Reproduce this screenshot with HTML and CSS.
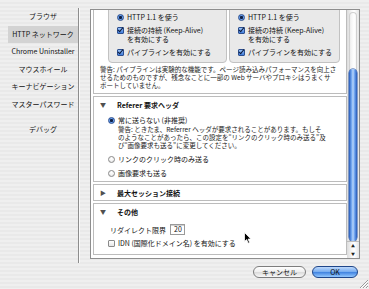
FILE: index.html
```html
<!DOCTYPE html>
<html lang="ja">

<head>
    <meta charset="UTF-8">
    <title>HTTP ネットワーク</title>
    <link rel="stylesheet" href="styles.css">
</head>

<body>

    <div class="prefs">
        <ul class="sidebar">
            <li>ブラウザ</li>
            <li class="selected">HTTP ネットワーク</li>
            <li>Chrome Uninstaller</li>
            <li>マウスホイール</li>
            <li>キーナビゲーション</li>
            <li>マスターパスワード</li>
            <li class="spaced">デバッグ</li>
        </ul>

        <div class="pane">
            <div class="scroll-frame">
                <div class="scroll-content">
                    <div class="sections">

                        <div class="section first">
                            <div class="groups">
                                <div class="group left">
                                    <div class="opt"><span class="radio on"></span><span>HTTP 1.1 を使う</span></div>
                                    <div class="opt"><span class="check on"></span><span>接続の持続 (Keep-Alive)<br>を有効にする</span></div>
                                    <div class="opt"><span class="check on"></span><span>パイプラインを有効にする</span></div>
                                </div>
                                <div class="group right">
                                    <div class="opt"><span class="radio on"></span><span>HTTP 1.1 を使う</span></div>
                                    <div class="opt"><span class="check on"></span><span>接続の持続 (Keep-Alive)<br>を有効にする</span></div>
                                    <div class="opt"><span class="check on"></span><span>パイプラインを有効にする</span></div>
                                </div>
                            </div>
                            <p class="note">警告: パイプラインは実験的な機能です。ページ読み込みパフォーマンスを向上さ<br>せるためのものですが、残念なことに一部の Web サーバやプロキシはうまくサ<br>ポートしていません。</p>
                        </div>

                        <div class="section">
                            <div class="section-head"><span class="twisty">▼</span>Referer 要求ヘッダ</div>
                            <div class="sec-body referer">
                                <div class="opt"><span class="radio on"></span><span>常に送らない (非推奨)</span></div>
                                <p class="note sub">警告: ときたま、Referrer ヘッダが要求されることがあります。もしそ<br>のようなことがあったら、この設定を“リンクのクリック時のみ送る”及<br>び“画像要求も送る”に変更してください。</p>
                                <div class="opt gap-l"><span class="radio"></span><span>リンクのクリック時のみ送る</span></div>
                                <div class="opt gap-s"><span class="radio"></span><span>画像要求も送る</span></div>
                            </div>
                        </div>

                        <div class="section closed">
                            <div class="section-head"><span class="twisty">▶</span>最大セッション接続</div>
                        </div>

                        <div class="section">
                            <div class="section-head"><span class="twisty">▼</span>その他</div>
                            <div class="sec-body misc">
                                <div class="field"><span>リダイレクト限界</span><span class="textbox">20</span></div>
                                <div class="opt"><span class="check"></span><span>IDN (国際化ドメイン名) を有効にする</span></div>
                            </div>
                        </div>

                    </div>
                </div>

                <div class="scrollbar">
                    <div class="track">
                        <div class="thumb"></div>
                    </div>
                    <div class="arrows">
                        <span class="arrow">▲</span>
                        <span class="arrow">▼</span>
                    </div>
                </div>
            </div>
        </div>
    </div>

    <div class="buttons">
        <span class="btn cancel">キャンセル</span>
        <span class="btn ok">OK</span>
    </div>

    <svg class="cursor" width="8" height="12" viewBox="0 0 8 12">
        <path d="M0.5 0.5 L0.5 9.5 L2.6 7.6 L4.2 11.2 L5.6 10.6 L4.1 7.1 L7 7.1 Z" fill="#000" stroke="#fff" stroke-width="0.8"/>
    </svg>

    <svg class="grip" width="10" height="10" viewBox="0 0 10 10">
        <path d="M2 10 L10 2 M5 10 L10 5 M8 10 L10 8" stroke="#9a9a9a" stroke-width="1"/>
        <path d="M3 10 L10 3 M6 10 L10 6 M9 10 L10 9" stroke="#fff" stroke-width="1"/>
    </svg>

</body>

</html>
```

FILE: styles.css
```css
body {
    margin: 0;
    width: 369px;
    height: 289px;
    overflow: hidden;
    position: relative;
    font-family: "Noto Sans CJK JP", "DejaVu Sans", sans-serif;
    font-size: 7px;
    color: #111;
    background: repeating-linear-gradient(to bottom, #efefef 0, #efefef 2px, #e9e9e9 2px, #e9e9e9 4px);
}

.prefs {
    display: flex;
    height: 263px;
    padding-top: 8px;
    box-sizing: border-box;
}

/* left category list */
.sidebar {
    list-style: none;
    margin: 0 0 0 8px;
    padding: 0;
    width: 70px;
    border-right: 1px solid #8d8d8d;
    box-shadow: 1px 0 0 #fafafa;
}

.sidebar li {
    height: 17.5px;
    line-height: 17.5px;
    text-align: center;
    white-space: nowrap;
}

.sidebar .selected {
    background-color: #d3d3d3;
}

.sidebar .spaced {
    margin-top: 8px;
}

/* scrolling settings pane */
.pane {
    margin: 1px 0 0 11px;
}

.scroll-frame {
    display: flex;
    width: 270px;
    height: 250px;
    box-sizing: border-box;
    border: 1px solid #8e8e8e;
    background-color: #fff;
    overflow: hidden;
}

.scroll-content {
    width: 256px;
    padding-left: 2px;
    box-sizing: border-box;
    overflow: hidden;
}

.section {
    border: 1px solid #bcbcbc;
    margin-bottom: 2px;
    background-color: #fff;
}

.section.first {
    border-top: none;
}

.section-head {
    display: flex;
    height: 10px;
    line-height: 10px;
    padding: 3px 0 0 6px;
    font-weight: bold;
    white-space: nowrap;
}

.closed .section-head {
    padding-bottom: 2px;
}

.twisty {
    width: 17px;
    font-size: 6px;
    font-weight: normal;
    color: #505050;
}

.groups {
    display: flex;
    gap: 2px;
    margin: -6px 0 0 14px;
}

.group {
    border: 1px solid #c2c2c2;
    border-radius: 4px;
    background-color: #e9e9e9;
    padding: 8px 4px 5px 8px;
    white-space: nowrap;
}

.group.left {
    width: 119px;
    box-sizing: border-box;
}

.group.right {
    width: 111px;
    box-sizing: border-box;
}

.opt {
    display: flex;
    align-items: flex-start;
    line-height: 9px;
    margin-top: 4px;
    white-space: nowrap;
}

.opt:first-child {
    margin-top: 0;
}

.radio {
    flex: none;
    width: 7px;
    height: 7px;
    margin: 1px 3px 0 0;
    box-sizing: border-box;
    border-radius: 50%;
    border: 1px solid #8a8a8a;
    background: radial-gradient(circle at 50% 30%, #fff 0, #f4f4f4 50%, #d8d8d8 100%);
}

.radio.on {
    border-color: #2d4f8f;
    background: radial-gradient(circle at 50% 50%, #0e1f45 0, #0e1f45 1.3px, #6ea4ee 1.8px, #3d78d8 100%);
}

.check {
    flex: none;
    width: 7px;
    height: 7px;
    margin: 1px 3px 0 0;
    box-sizing: border-box;
    border: 1px solid #8a8a8a;
    border-radius: 1px;
    background: linear-gradient(#fff, #e6e6e6);
    position: relative;
}

.check.on {
    border-color: #2d4f8f;
    background: linear-gradient(#9cc4f7, #3f7bda);
}

.check.on::after {
    content: "";
    position: absolute;
    left: 1px;
    top: -2px;
    width: 2px;
    height: 5px;
    border-right: 1.6px solid #0b1a3c;
    border-bottom: 1.6px solid #0b1a3c;
    transform: rotate(40deg);
}

.note {
    margin: 2px 0 4px 6px;
    font-size: 6.5px;
    line-height: 8px;
    white-space: nowrap;
    color: #222;
}

.note.sub {
    margin: 0 0 0 10px;
}

.sec-body {
    padding: 6px 0 3px 14px;
}

.gap-l {
    margin-top: 6px;
}

.gap-s {
    margin-top: 5px;
}

.sec-body.misc {
    padding: 7px 0 6px 14px;
}

.field {
    display: flex;
    align-items: center;
    height: 11px;
    padding-left: 2px;
    margin-bottom: 4px;
}

.textbox {
    width: 15px;
    height: 11px;
    box-sizing: border-box;
    margin-left: 4px;
    padding-left: 3px;
    line-height: 9px;
    border: 1px solid #9a9a9a;
    box-shadow: inset 0 1px 0 #cfcfcf;
    background-color: #fff;
}

/* aqua scroller */
.scrollbar {
    width: 12px;
    display: flex;
    flex-direction: column;
    background: linear-gradient(to right, #dcdcdc, #f7f7f7 40%, #fff 60%, #e4e4e4);
}

.track {
    flex: 1;
    margin: 2px 2px 0 2px;
    border-radius: 4px 4px 0 0;
    border: 1px solid #d0d0d0;
    border-bottom: none;
}

.thumb {
    width: 8px;
    height: 172px;
    margin: 56px 0 0 -1px;
    border-radius: 4px;
    background: linear-gradient(to right, #2559b8, #6fa4ee 30%, #b8d6fb 50%, #6ea3ef 70%, #2559b8);
    box-shadow: 0 0 0 0.5px #1e4a9a;
}

.arrows {
    height: 16px;
    display: flex;
    flex-direction: column;
    border-top: 1px solid #bdbdbd;
}

.arrow {
    height: 8px;
    line-height: 8px;
    font-size: 4px;
    text-align: center;
    color: #222;
}

/* dialog buttons */
.buttons {
    display: flex;
    justify-content: flex-end;
    gap: 6px;
    padding: 3px 11px 0 0;
}

.btn {
    height: 12px;
    box-sizing: border-box;
    border-radius: 6px;
    line-height: 10px;
    text-align: center;
    font-size: 7px;
}

.btn.cancel {
    width: 53px;
    border: 1px solid #7d7d7d;
    background: linear-gradient(#ffffff, #eeeeee 48%, #dadada 52%, #f8f8f8);
}

.btn.ok {
    width: 46px;
    border: 1px solid #1f4689;
    background: linear-gradient(#bcd8fb, #77acef 48%, #3f82e0 52%, #93c8ff);
}

.cursor {
    position: absolute;
    left: 244px;
    top: 232px;
}

.grip {
    position: absolute;
    right: 1px;
    bottom: 1px;
}
```
